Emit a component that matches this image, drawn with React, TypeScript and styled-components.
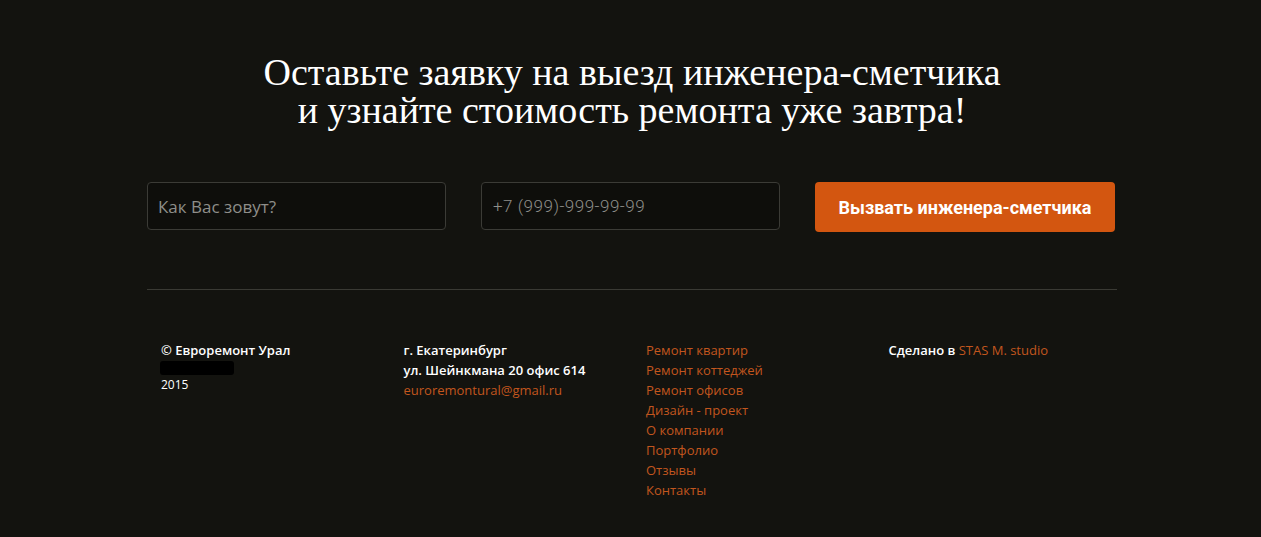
import React from "react";
import styled, { createGlobalStyle } from "styled-components";

const Global = createGlobalStyle`
  html, body { margin: 0; padding: 0; background: #13130f; }
  body { font-family: "Open Sans", "Noto Sans", sans-serif; }
`;

const Page = styled.div`
  background: #13130f;
  min-height: 537px;
  padding-top: 53px;
  box-sizing: border-box;
`;

const Container = styled.div`
  width: 970px;
  margin-left: calc(50% - 483.5px);
`;

const Heading = styled.h2`
  margin: 0;
  text-align: center;
  color: #ffffff;
  font-family: "Liberation Serif", "DejaVu Serif", serif;
  font-weight: 400;
  font-size: 38px;
  line-height: 38px;
`;

const Line = styled.span`
  display: block;
`;

const Form = styled.form`
  margin-top: 53px;
  display: grid;
  grid-template-columns: 299px 299px 300px;
  column-gap: 35px;
  align-items: start;
`;

const Input = styled.input`
  box-sizing: border-box;
  height: 48px;
  width: 100%;
  background: #0e0e0b;
  border: 1px solid #3b3b36;
  border-radius: 4px;
  padding: 0 10px;
  color: #9a9a96;
  outline: none;
  &::placeholder { color: #8e8e8a; }
`;

const NameInput = styled(Input)`
  font-family: "Open Sans", "Noto Sans", sans-serif;
  font-size: 17px;
`;

const PhoneInput = styled(Input)`
  font-family: "Roboto", "Liberation Sans", sans-serif;
  font-weight: 300;
  font-size: 17px;
  letter-spacing: 0.5px;
  padding-left: 11px;
`;

const Button = styled.button`
  height: 50px;
  background: #d35610;
  border: none;
  border-radius: 4px;
  color: #ffffff;
  font-family: "Roboto", "Liberation Sans", sans-serif;
  font-weight: 700;
  font-size: 18px;
  cursor: pointer;
`;

const Divider = styled.hr`
  margin: 57px 0 0;
  border: none;
  border-top: 1px solid #3a3a34;
`;

const Footer = styled.div`
  margin-top: 50px;
  display: grid;
  grid-template-columns: repeat(4, 1fr);
`;

const Col = styled.div`
  padding-left: 14px;
  display: flex;
  flex-direction: column;
  font-size: 13px;
  line-height: 20px;
  color: #ffffff;
`;

const Strong = styled.span`
  font-weight: 600;
  color: #ffffff;
`;

const Link = styled.a`
  color: #c2561e;
  text-decoration: none;
  font-weight: 400;
`;

const Redacted = styled.span`
  display: block;
  width: 74px;
  height: 14px;
  margin: 1px 0 0 -1px;
  background: #000;
  border-radius: 3px;
`;

const Year = styled.span`
  font-size: 12px;
  line-height: 20px;
`;

const menu = [
  "Ремонт квартир",
  "Ремонт коттеджей",
  "Ремонт офисов",
  "Дизайн - проект",
  "О компании",
  "Портфолио",
  "Отзывы",
  "Контакты",
];

export default function App() {
  return (
    <Page>
      <Global />
      <Container>
        <Heading>
          <Line>Оставьте заявку на выезд инженера-сметчика</Line>
          <Line>и узнайте стоимость ремонта уже завтра!</Line>
        </Heading>
        <Form onSubmit={(e) => e.preventDefault()}>
          <NameInput placeholder="Как Вас зовут?" />
          <PhoneInput placeholder="+7 (999)-999-99-99" />
          <Button type="submit">Вызвать инженера-сметчика</Button>
        </Form>
        <Divider />
        <Footer>
          <Col>
            <Strong>© Евроремонт Урал</Strong>
            <Redacted />
            <Year>2015</Year>
          </Col>
          <Col>
            <Strong>г. Екатеринбург</Strong>
            <Strong>ул. Шейнкмана 20 офис 614</Strong>
            <Link href="#">euroremontural@gmail.ru</Link>
          </Col>
          <Col>
            {menu.map((m) => (
              <Link key={m} href="#">{m}</Link>
            ))}
          </Col>
          <Col>
            <span>
              <Strong>Сделано в </Strong>
              <Link href="#">STAS M. studio</Link>
            </span>
          </Col>
        </Footer>
      </Container>
    </Page>
  );
}
